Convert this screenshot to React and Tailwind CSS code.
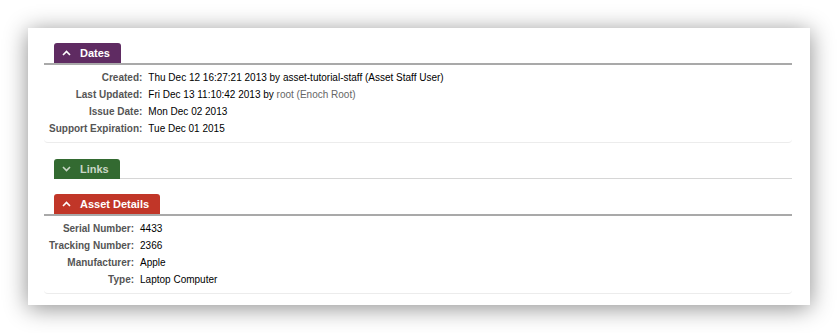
import React from 'react';

const Chevron = ({ up, color }) => (
  <svg width="9" height="6" viewBox="0 0 9 6" className="shrink-0">
    <path
      d={up ? 'M1 5 L4.5 1.5 L8 5' : 'M1 1 L4.5 4.5 L8 1'}
      fill="none"
      stroke={color}
      strokeWidth="1.6"
    />
  </svg>
);

const Tab = ({ label, up, bg, text }) => (
  <div className={`ml-[10px] w-fit h-[20px] flex items-center gap-[9px] pl-[8px] pr-[11px] rounded-t-[3px] ${bg}`}>
    <Chevron up={up} color={text} />
    <span className="text-[11px] font-bold leading-none" style={{ color: text }}>
      {label}
    </span>
  </div>
);

const Rows = ({ rows }) => (
  <div className="grid grid-cols-[auto_1fr] gap-x-[6px] pl-[5px] pt-[4px] pb-[5px] border-b border-[#ececec] rounded-b-[4px]">
    {rows.map(([label, value]) => (
      <React.Fragment key={label}>
        <div className="text-right font-bold text-[#555] leading-[17px]">{label}:</div>
        <div className="text-black leading-[17px]">{value}</div>
      </React.Fragment>
    ))}
  </div>
);

const App = () => {
  const dates = [
    ['Created', 'Thu Dec 12 16:27:21 2013 by asset-tutorial-staff (Asset Staff User)'],
    [
      'Last Updated',
      <span>
        Fri Dec 13 11:10:42 2013 by <span className="text-[#666]">root (Enoch Root)</span>
      </span>,
    ],
    ['Issue Date', 'Mon Dec 02 2013'],
    ['Support Expiration', 'Tue Dec 01 2015'],
  ];

  const details = [
    ['Serial Number', '4433'],
    ['Tracking Number', '2366'],
    ['Manufacturer', 'Apple'],
    ['Type', 'Laptop Computer'],
  ];

  return (
    <div
      className="w-[838px] h-[333px] bg-white pt-[28px] pl-[28px] overflow-hidden"
      style={{ fontFamily: '"Liberation Sans", Arial, sans-serif' }}
    >
      <div className="w-[782px] h-[277px] bg-white shadow-[0_3px_22px_rgba(0,0,0,0.45)] pl-[16px] pr-[18px] pt-[15px] text-[10px]">
        {/* Dates */}
        <Tab label="Dates" up bg="bg-[#5f2b62]" text="#ffffff" />
        <div className="h-[2px] bg-[#a9a9a9]" />
        <Rows rows={dates} />

        {/* Links */}
        <div className="mt-[16px] flex items-end">
          <Tab label="Links" bg="bg-[#336a31]" text="#c9d6c6" />
          <div className="flex-1 h-px bg-[#d6d6d6]" />
        </div>

        {/* Asset Details */}
        <div className="mt-[15px]">
          <Tab label="Asset Details" up bg="bg-[#c13628]" text="#ffffff" />
        </div>
        <div className="h-[2px] bg-[#a9a9a9]" />
        <Rows rows={details} />
      </div>
    </div>
  );
};

export default App;
